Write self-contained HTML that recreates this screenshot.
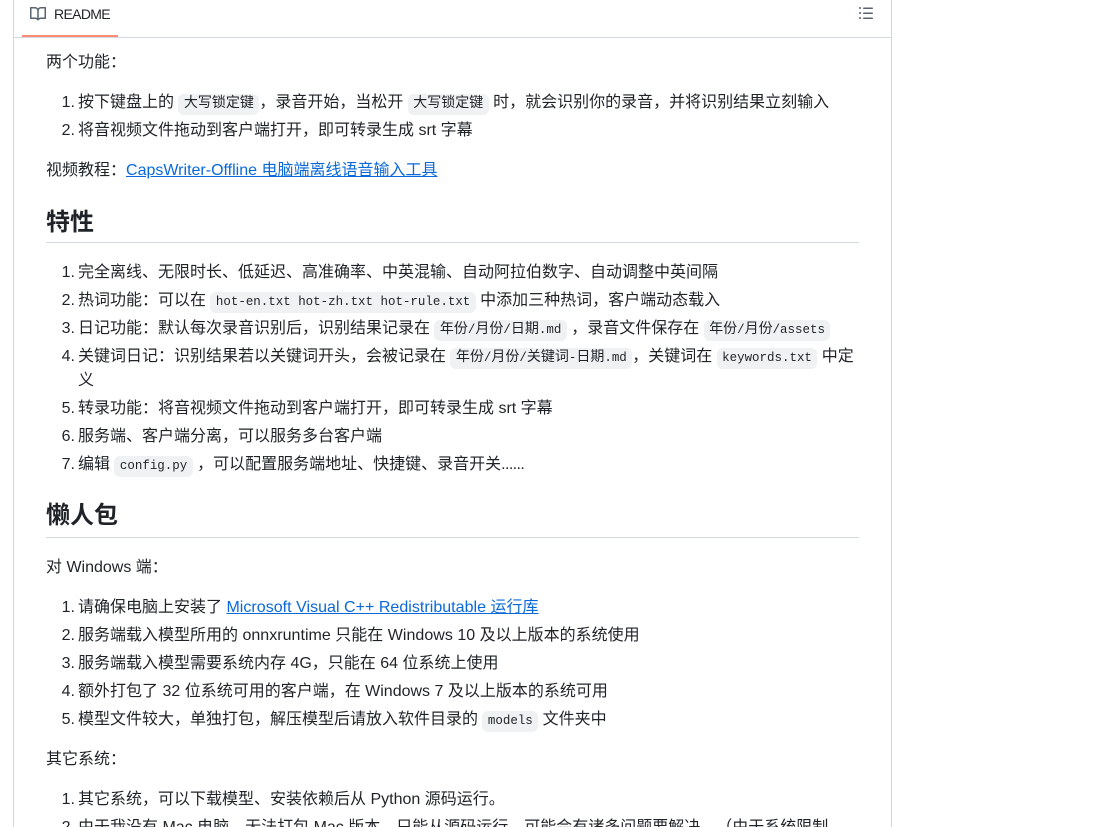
<!DOCTYPE html>
<html lang="zh"><head><meta charset="utf-8"><title>README</title>
<style>
html,body{margin:0;padding:0;background:#fff;width:1111px;height:827px;overflow:hidden}
body{font-family:"Liberation Sans","Noto Sans CJK SC",sans-serif;font-size:16px;color:#1f2328;position:relative;text-spacing-trim:space-all}
.box{position:absolute;left:13px;top:-10px;width:877px;height:850px;border:1px solid #d1d9e0;box-sizing:content-box}
.hr{position:absolute;left:14px;width:877px;height:1px;top:37px;background:#d1d9e0}
.tab{position:absolute;left:22px;top:35px;width:96px;height:2px;background:#fd8c73}
.w{position:absolute;left:0;top:2px;width:1111px;height:825px}
.t{position:absolute;left:46px;white-space:nowrap;line-height:24px;height:24px}
.l{left:78px}
.num{position:absolute;left:-17px;width:14px;text-align:right}
code{display:inline-block;height:21px;line-height:21px;font-family:"Liberation Mono","Noto Sans CJK SC",monospace;font-size:12.47px;background:#eff1f3;border-radius:6px;padding:0 5.45px}
code.c{font-size:14px}
code b{font-weight:400;font-size:12.47px}
a{color:#0969da;text-decoration:underline}
.h{position:absolute;left:46px;font-size:24px;font-weight:700;line-height:30px;white-space:nowrap}
.r{position:absolute;left:46px;width:813px;height:1px;background:#d1d9e0}
.d{letter-spacing:-.6px}
.s{letter-spacing:.03px}
svg{position:absolute;display:block}
</style></head><body>
<div class="box"></div>
<div class="hr"></div>
<div class="tab"></div>
<svg style="left:30px;top:6px" width="16" height="16" viewBox="0 0 16 16" fill="#59636e"><path d="M0 1.75A.75.75 0 0 1 .75 1h4.253c1.227 0 2.317.59 3 1.501A3.743 3.743 0 0 1 11.006 1h4.245a.75.75 0 0 1 .75.75v10.5a.75.75 0 0 1-.75.75h-4.507a2.25 2.25 0 0 0-1.591.659l-.622.621a.75.75 0 0 1-1.06 0l-.622-.621A2.25 2.25 0 0 0 5.258 13H.75a.75.75 0 0 1-.75-.75Zm7.251 10.324.004-5.073-.002-2.253A2.25 2.25 0 0 0 5.003 2.5H1.5v9h3.757a3.75 3.75 0 0 1 1.994.574ZM8.755 4.75l-.004 7.322a3.752 3.752 0 0 1 1.992-.572H14.5v-9h-3.495a2.25 2.25 0 0 0-2.25 2.25Z"/></svg>
<div style="position:absolute;left:54px;top:2px;font-size:14px;line-height:24px;color:#1f2328;letter-spacing:-.65px">README</div>
<svg style="left:858px;top:5px" width="16" height="16" viewBox="0 0 16 16" fill="#59636e"><path d="M5.75 2.5h8.5a.75.75 0 0 1 0 1.5h-8.5a.75.75 0 0 1 0-1.5Zm0 5h8.5a.75.75 0 0 1 0 1.5h-8.5a.75.75 0 0 1 0-1.5Zm0 5h8.5a.75.75 0 0 1 0 1.5h-8.5a.75.75 0 0 1 0-1.5ZM2 14a1 1 0 1 1 0-2 1 1 0 0 1 0 2Zm1-6a1 1 0 1 1-2 0 1 1 0 0 1 2 0ZM2 4a1 1 0 1 1 0-2 1 1 0 0 1 0 2Z"/></svg>
<div class="r" style="top:242px"></div>
<div class="r" style="top:537px"></div>
<div class="w">
<div class="t" style="top:49px">两个功能：</div>
<div class="t l" style="top:89px"><span class="num">1.</span>按下键盘上的 <code class="c">大写锁定键</code>，录音开始，当松开 <code class="c">大写锁定键</code> 时，就会识别你的录音，并将识别结果立刻输入</div>
<div class="t l" style="top:117px"><span class="num">2.</span>将音视频文件拖动到客户端打开，即可转录生成 srt 字幕</div>
<div class="t" style="top:157px">视频教程：<a>CapsWriter-Offline 电脑端离线语音输入工具</a></div>
<div class="h" style="top:206px">特性</div>
<div class="t l" style="top:259px"><span class="num">1.</span>完全离线、无限时长、低延迟、高准确率、中英混输、自动阿拉伯数字、自动调整中英间隔</div>
<div class="t l" style="top:287px"><span class="num">2.</span>热词功能：可以在 <code>hot-en.txt hot-zh.txt hot-rule.txt</code> 中添加三种热词，客户端动态载入</div>
<div class="t l" style="top:315px"><span class="num">3.</span>日记功能：默认每次录音识别后，识别结果记录在 <code class="c">年份<b>/</b>月份<b>/</b>日期<b>.md</b></code> ，录音文件保存在 <code class="c">年份<b>/</b>月份<b>/assets</b></code></div>
<div class="t l" style="top:343px"><span class="num">4.</span>关键词日记：识别结果若以关键词开头，会被记录在 <code class="c">年份<b>/</b>月份<b>/</b>关键词<b>-</b>日期<b>.md</b></code>，关键词在 <code>keywords.txt</code> 中定</div>
<div class="t l" style="top:367px">义</div>
<div class="t l" style="top:395px"><span class="num">5.</span>转录功能：将音视频文件拖动到客户端打开，即可转录生成 srt 字幕</div>
<div class="t l" style="top:423px"><span class="num">6.</span>服务端、客户端分离，可以服务多台客户端</div>
<div class="t l" style="top:451px"><span class="num">7.</span>编辑 <code>config.py</code> ，可以配置服务端地址、快捷键、录音开关<span class="d">......</span></div>
<div class="h" style="top:499px">懒人包</div>
<div class="t" style="top:554px">对 Windows 端：</div>
<div class="t l" style="top:594px"><span class="num">1.</span>请确保电脑上安装了 <a class="s">Microsoft Visual C++ Redistributable 运行库</a></div>
<div class="t l" style="top:622px"><span class="num">2.</span>服务端载入模型所用的 <span class="s">onnxruntime</span> 只能在 <span class="s">Windows 10</span> 及以上版本的系统使用</div>
<div class="t l" style="top:650px"><span class="num">3.</span>服务端载入模型需要系统内存 4G，只能在 64 位系统上使用</div>
<div class="t l" style="top:678px"><span class="num">4.</span>额外打包了 32 位系统可用的客户端，在 Windows 7 及以上版本的系统可用</div>
<div class="t l" style="top:706px"><span class="num">5.</span>模型文件较大，单独打包，解压模型后请放入软件目录的 <code>models</code> 文件夹中</div>
<div class="t" style="top:746px">其它系统：</div>
<div class="t l" style="top:786px"><span class="num">1.</span>其它系统，可以下载模型、安装依赖后从 Python 源码运行。</div>
<div class="t l" style="top:814px"><span class="num">2.</span>由于我没有 Mac 电脑，无法打包 Mac 版本，只能从源码运行，可能会有诸多问题要解决。（由于系统限制</div>
</div>
</body></html>
